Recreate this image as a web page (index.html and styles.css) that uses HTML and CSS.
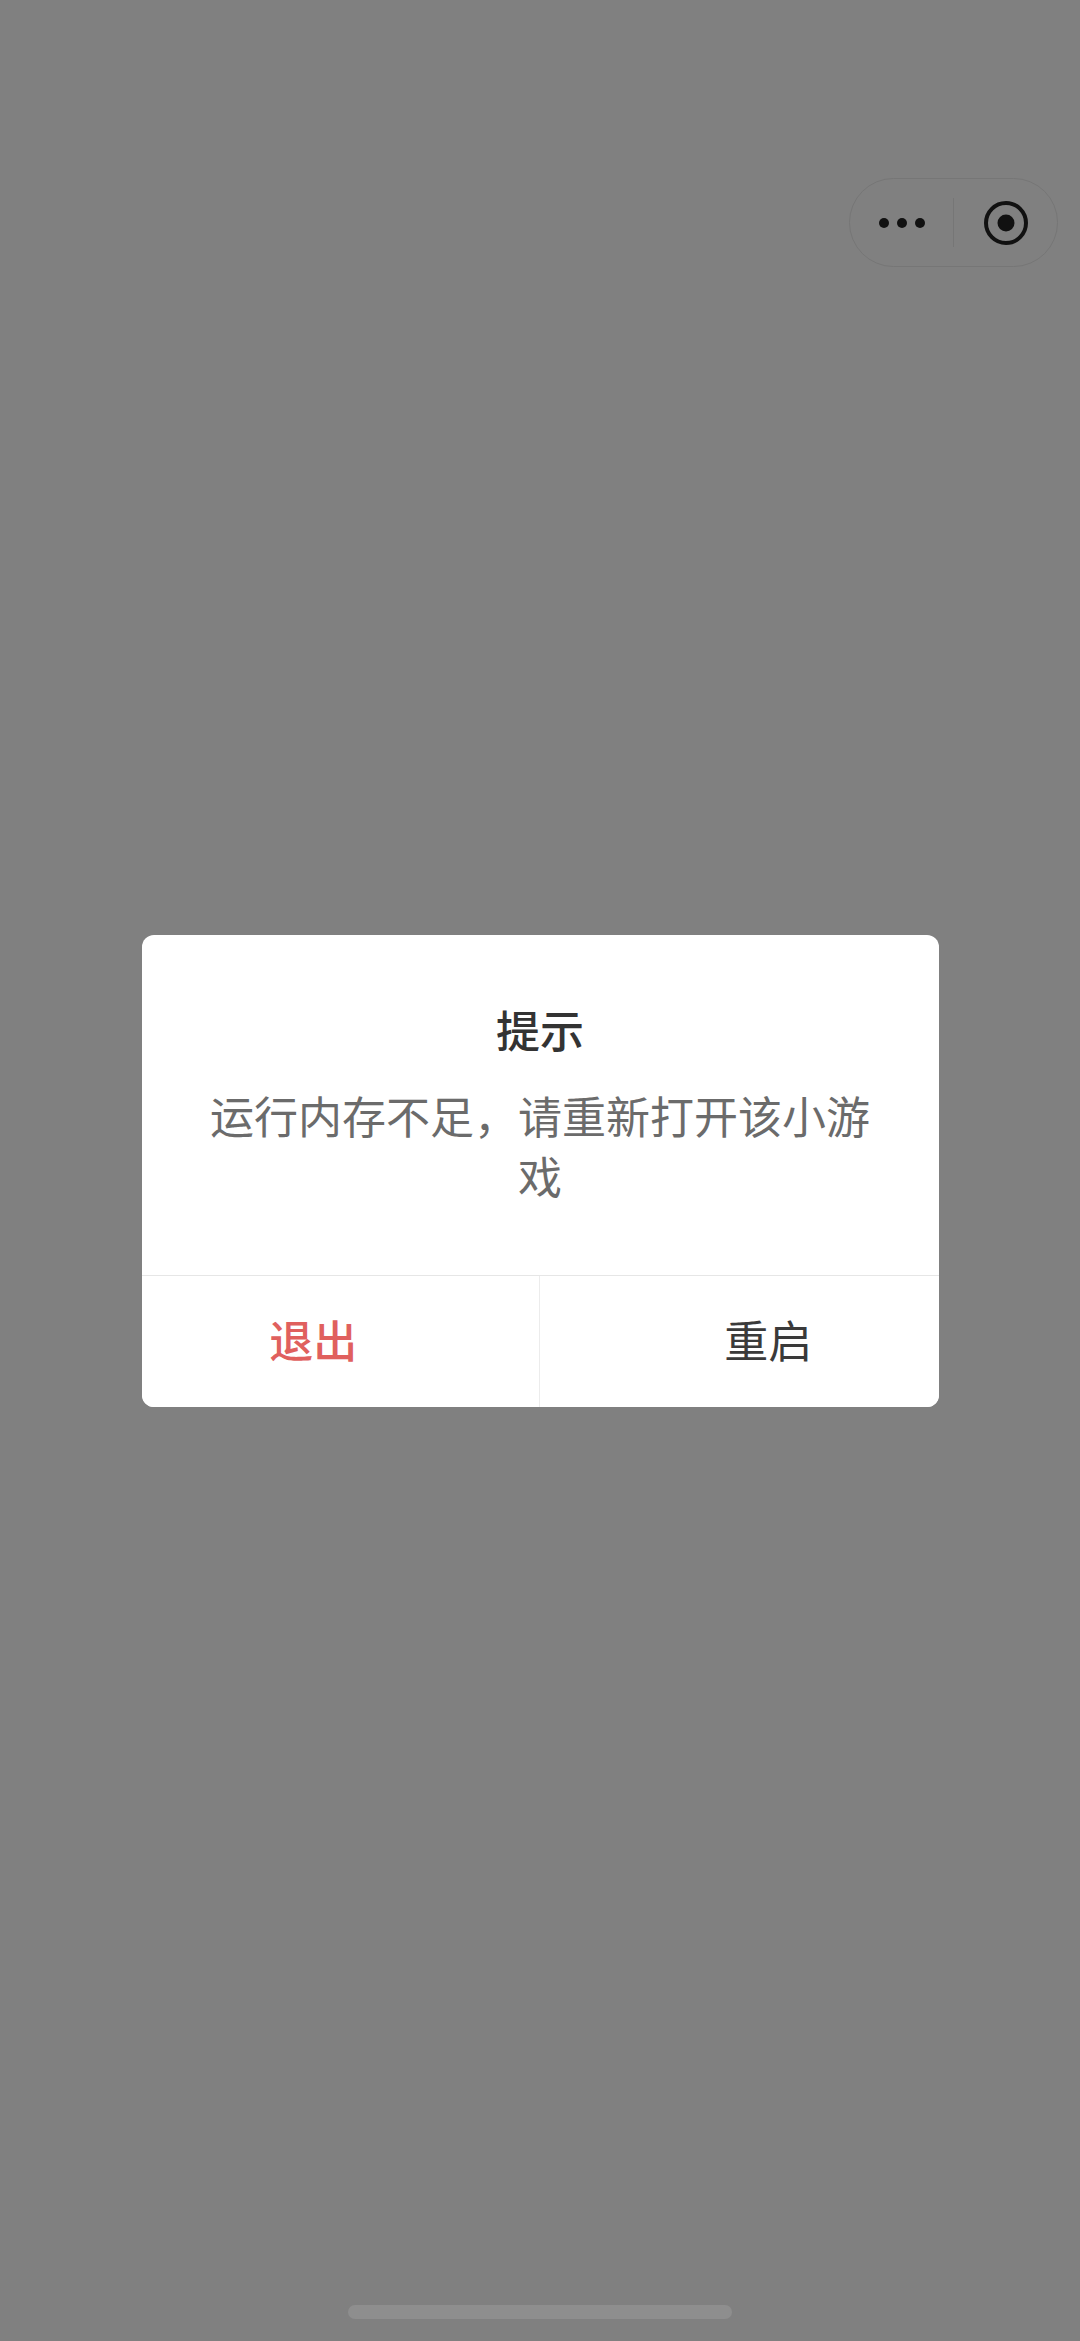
FILE: index.html
```html
<!DOCTYPE html>
<html lang="zh-CN">

<head>
    <meta charset="UTF-8">
    <meta name="viewport" content="width=device-width, initial-scale=1.0">
    <title>提示</title>
    <link rel="stylesheet" href="styles.css">
</head>

<body>
    <div class="page">
        <div class="capsule">
            <div class="capsule-more">
                <span class="dot"></span>
                <span class="dot"></span>
                <span class="dot"></span>
            </div>
            <div class="capsule-line"></div>
            <div class="capsule-close">
                <svg width="44" height="44" viewBox="0 0 44 44">
                    <circle cx="22" cy="22" r="20" fill="none" stroke="#111" stroke-width="4" />
                    <circle cx="22" cy="22" r="8.5" fill="#111" />
                </svg>
            </div>
        </div>

        <div class="dialog">
            <div class="dialog-body">
                <h2>提示</h2>
                <p>运行内存不足，请重新打开该小游戏</p>
            </div>
            <div class="dialog-footer">
                <button class="btn btn-exit" type="button">退出</button>
                <button class="btn btn-restart" type="button">重启</button>
            </div>
        </div>

        <div class="home-bar"></div>
    </div>
</body>

</html>
```

FILE: styles.css
```css
* {
  box-sizing: border-box;
}
body {
  margin: 0;
  background-color: #808080;
  font-family: "Noto Sans CJK SC", "Noto Sans", sans-serif;
}
.page {
  display: flex;
  flex-direction: column;
  width: 1080px;
  height: 2341px;
  padding-top: 178px;
}

/* capsule top right */
.capsule {
  display: flex;
  align-items: center;
  align-self: flex-end;
  width: 209px;
  height: 89px;
  margin-right: 22px;
  border: 1px solid #767676;
  border-radius: 45px;
}
.capsule-more {
  display: flex;
  justify-content: center;
  gap: 8px;
  width: 103px;
}
.dot {
  width: 10px;
  height: 10px;
  border-radius: 50%;
  background-color: #111;
}
.capsule-line {
  width: 1px;
  height: 49px;
  background-color: #767676;
}
.capsule-close {
  display: flex;
  justify-content: center;
  flex: 1;
}

/* dialog */
.dialog {
  align-self: center;
  width: 797px;
  margin-top: 668px;
  border-radius: 12px;
  background-color: #fff;
  overflow: hidden;
}
.dialog-body {
  height: 340px;
  padding: 63px 56px 0;
  text-align: center;
}
.dialog-body h2 {
  margin: 0;
  color: #333;
  font-size: 44px;
  font-weight: 500;
  line-height: 62px;
}
.dialog-body p {
  margin: 25px 0 0;
  color: #6b6b6b;
  font-size: 44px;
  font-weight: 400;
  line-height: 60px;
}
.dialog-footer {
  display: flex;
  height: 132px;
  border-top: 1px solid #e6e6e6;
}
.btn {
  flex: 0 0 50%;
  padding: 0 0 6px;
  border: none;
  background-color: #fff;
  font-family: inherit;
  font-size: 44px;
}
.btn-exit {
  padding-right: 54px;
  border-right: 1px solid #ececec;
  color: #e0605e;
  font-weight: 500;
}
.btn-restart {
  padding-left: 58px;
  color: #3a3a3a;
}

/* home indicator */
.home-bar {
  align-self: center;
  width: 384px;
  height: 14px;
  margin-top: auto;
  margin-bottom: 22px;
  border-radius: 7px;
  background-color: #8e8e8e;
}
```
